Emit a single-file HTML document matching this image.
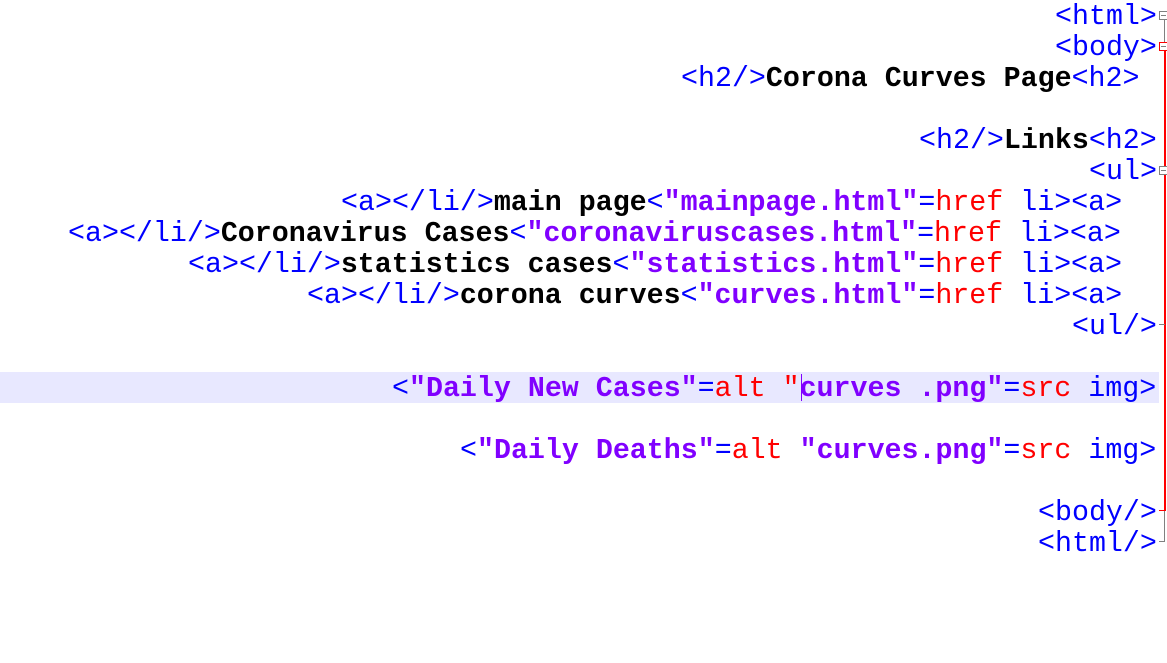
<!DOCTYPE html>
<html><head><style>
body{margin:0;width:1167px;height:663px;background:#fff;position:relative;overflow:hidden;font-family:"Liberation Mono",monospace;font-size:28.3px;}
.l{position:absolute;height:31px;line-height:31px;white-space:pre;color:#0000ff;margin-top:2px}
.k{color:#000;font-weight:bold}
.s{color:#8000ff;font-weight:bold}
.r{color:#ff0000}
.hl{position:absolute;left:0;top:372px;width:1159px;height:31px;background:#e8e8ff}
.cur{position:absolute;left:801px;top:374px;width:1px;height:27px;background:#8000ff}
.fb{position:absolute;width:7px;height:7px;border:1px solid #808080;background:#fff;left:1159px}
.fb::after{content:"";position:absolute;left:1px;top:3px;width:5px;height:1px;background:#808080}
</style></head><body>
<div class="hl"></div>
<div class="l" style="top:0;left:1055px">&lt;html&gt;</div>
<div class="l" style="top:31px;left:1055px">&lt;body&gt;</div>
<div class="l" style="top:62px;left:681px">&lt;h2/&gt;<span class="k">Corona Curves Page</span>&lt;h2&gt;</div>
<div class="l" style="top:124px;left:919px">&lt;h2/&gt;<span class="k">Links</span>&lt;h2&gt;</div>
<div class="l" style="top:155px;left:1089px">&lt;ul&gt;</div>
<div class="l" style="top:186px;left:341px">&lt;a&gt;&lt;/li/&gt;<span class="k">main page</span>&lt;<span class="s">"mainpage.html"</span>=<span class="r">href</span> li&gt;&lt;a&gt;</div>
<div class="l" style="top:217px;left:68px">&lt;a&gt;&lt;/li/&gt;<span class="k">Coronavirus Cases</span>&lt;<span class="s">"coronaviruscases.html"</span>=<span class="r">href</span> li&gt;&lt;a&gt;</div>
<div class="l" style="top:248px;left:188px">&lt;a&gt;&lt;/li/&gt;<span class="k">statistics cases</span>&lt;<span class="s">"statistics.html"</span>=<span class="r">href</span> li&gt;&lt;a&gt;</div>
<div class="l" style="top:279px;left:307px">&lt;a&gt;&lt;/li/&gt;<span class="k">corona curves</span>&lt;<span class="s">"curves.html"</span>=<span class="r">href</span> li&gt;&lt;a&gt;</div>
<div class="l" style="top:310px;left:1072px">&lt;ul/&gt;</div>
<div class="l" style="top:372px;left:392px">&lt;<span class="s">"Daily New Cases"</span>=<span class="r">alt</span> <span class="r">"</span><span class="s">curves .png"</span>=<span class="r">src</span> img&gt;</div>
<div class="cur"></div>
<div class="l" style="top:434px;left:460px">&lt;<span class="s">"Daily Deaths"</span>=<span class="r">alt</span> <span class="s">"curves.png"</span>=<span class="r">src</span> img&gt;</div>
<div class="l" style="top:496px;left:1038px">&lt;body/&gt;</div>
<div class="l" style="top:527px;left:1038px">&lt;html/&gt;</div>
<div style="position:absolute;left:1164px;top:19px;width:1px;height:24px;background:#808080"></div>
<div style="position:absolute;left:1164px;top:50px;width:2px;height:461px;background:#ff0000"></div>
<div style="position:absolute;left:1159px;top:510px;width:7px;height:1px;background:#ff0000"></div>
<div style="position:absolute;left:1164px;top:511px;width:1px;height:31px;background:#808080"></div>
<div style="position:absolute;left:1159px;top:541px;width:6px;height:1px;background:#808080"></div>
<div style="position:absolute;left:1159px;top:324px;width:6px;height:1px;background:#808080"></div>
<div class="fb" style="top:11px"></div>
<div class="fb" style="top:42px;border-color:#ff0000"></div>
<div class="fb" style="top:166px"></div>
</body></html>
